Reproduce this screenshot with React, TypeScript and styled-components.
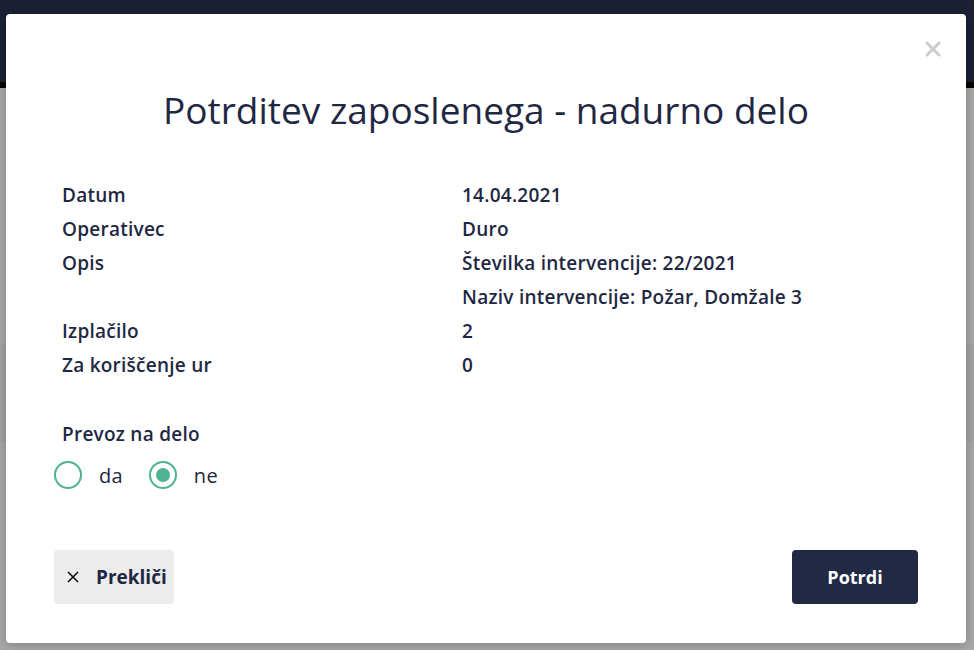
import { Fragment, useState } from "react";
import styled, { createGlobalStyle } from "styled-components";

const GlobalStyle = createGlobalStyle`
    html, body {
        margin: 0;
        padding: 0;
        height: 100%;
        overflow: hidden;
    }
    body {
        font-family: "Open Sans", "Noto Sans", sans-serif;
        color: #1f2843;
    }
`;

const Page = styled.div`
    position: relative;
    width: 974px;
    height: 650px;
    background: #a9a9a9;
    display: flex;
    flex-direction: column;
`;

const TopBar = styled.div`
    height: 82px;
    background: #1b2036;
    border-bottom: 6px solid #050505;
`;

const PageBody = styled.div`
    flex: 1;
    display: flex;
    flex-direction: column;
    padding-top: 256px;
`;

const PageCard = styled.div`
    height: 98px;
    background: #a3a3a3;
`;

const Overlay = styled.div`
    position: absolute;
    inset: 0;
    padding: 14px 8px 7px 6px;
    display: flex;
`;

const Modal = styled.div`
    position: relative;
    flex: 1;
    background: #ffffff;
    border-radius: 4px;
    box-shadow: 0 2px 12px rgba(0, 0, 0, 0.25);
    padding: 70px 48px 39px 48px;
    display: flex;
    flex-direction: column;
`;

const CloseButton = styled.button`
    position: absolute;
    top: 24px;
    right: 22px;
    border: none;
    background: none;
    padding: 0;
    width: 22px;
    height: 22px;
    cursor: pointer;
    display: flex;
    align-items: center;
    justify-content: center;
`;

const Title = styled.h2`
    margin: 0 0 42px;
    text-align: center;
    font-size: 37px;
    font-weight: 400;
    line-height: 52px;
    color: #1f2843;
`;

const Details = styled.div`
    display: grid;
    grid-template-columns: 400px 1fr;
    padding-left: 8px;
    font-size: 19px;
    font-weight: 600;
    line-height: 34px;
    letter-spacing: 0.25px;
`;

const Label = styled.div`
    grid-column: 1;
`;

const Value = styled.div`
    grid-column: 2;
`;

const Section = styled.div`
    margin-top: 39px;
    padding-left: 8px;
    font-size: 19px;
    font-weight: 600;
    letter-spacing: 0.25px;
`;

const RadioRow = styled.div`
    display: flex;
    align-items: center;
    gap: 26px;
    margin-top: 14px;
    margin-left: -8px;
`;

const RadioOption = styled.label`
    display: flex;
    align-items: center;
    gap: 17px;
    font-size: 20px;
    font-weight: 400;
    cursor: pointer;
`;

const RadioCircle = styled.span<{ $checked: boolean }>`
    width: 28px;
    height: 28px;
    box-sizing: border-box;
    border: 2px solid #4fb293;
    border-radius: 50%;
    display: flex;
    align-items: center;
    justify-content: center;

    &::after {
        content: "";
        width: 14px;
        height: 14px;
        border-radius: 50%;
        background: #4fb293;
        display: ${(p) => (p.$checked ? "block" : "none")};
    }
`;

const Footer = styled.div`
    margin-top: auto;
    display: flex;
    justify-content: space-between;
    align-items: center;
`;

const CancelButton = styled.button`
    height: 54px;
    width: 120px;
    border: none;
    border-radius: 4px;
    background: #ececec;
    color: #1f2843;
    font-family: inherit;
    font-size: 19px;
    font-weight: 700;
    display: flex;
    align-items: center;
    gap: 17px;
    padding: 0 0 0 13px;
    cursor: pointer;
`;

const ConfirmButton = styled.button`
    height: 54px;
    width: 126px;
    border: none;
    border-radius: 4px;
    background: #212944;
    color: #ffffff;
    font-family: inherit;
    font-size: 18px;
    font-weight: 700;
    cursor: pointer;
`;

const rows: { label: string; values: string[] }[] = [
    { label: "Datum", values: ["14.04.2021"] },
    { label: "Operativec", values: ["Duro"] },
    {
        label: "Opis",
        values: [
            "Številka intervencije: 22/2021",
            "Naziv intervencije: Požar, Domžale 3",
        ],
    },
    { label: "Izplačilo", values: ["2"] },
    { label: "Za koriščenje ur", values: ["0"] },
];

export default function App() {
    const [transport, setTransport] = useState("ne");

    return (
        <>
            <GlobalStyle />
            <Page>
                <TopBar />
                <PageBody>
                    <PageCard />
                </PageBody>
                <Overlay>
                    <Modal>
                        <CloseButton aria-label="Zapri">
                            <svg width="16" height="16" viewBox="0 0 16 16">
                                <path
                                    d="M2 2 L14 14 M14 2 L2 14"
                                    stroke="#cccccc"
                                    strokeWidth="3"
                                    strokeLinecap="round"
                                />
                            </svg>
                        </CloseButton>
                        <Title>Potrditev zaposlenega - nadurno delo</Title>
                        <Details>
                            {rows.map((row) =>
                                row.values.map((v, i) => (
                                    <Fragment key={row.label + i}>
                                        <Label>{i === 0 ? row.label : ""}</Label>
                                        <Value>{v}</Value>
                                    </Fragment>
                                ))
                            )}
                        </Details>
                        <Section>
                            Prevoz na delo
                            <RadioRow>
                                {["da", "ne"].map((opt) => (
                                    <RadioOption
                                        key={opt}
                                        onClick={() => setTransport(opt)}
                                    >
                                        <RadioCircle $checked={transport === opt} />
                                        {opt}
                                    </RadioOption>
                                ))}
                            </RadioRow>
                        </Section>
                        <Footer>
                            <CancelButton>
                                <svg width="12" height="12" viewBox="0 0 12 12">
                                    <path
                                        d="M1 1 L11 11 M11 1 L1 11"
                                        stroke="#111111"
                                        strokeWidth="1.6"
                                    />
                                </svg>
                                Prekliči
                            </CancelButton>
                            <ConfirmButton>Potrdi</ConfirmButton>
                        </Footer>
                    </Modal>
                </Overlay>
            </Page>
        </>
    );
}
